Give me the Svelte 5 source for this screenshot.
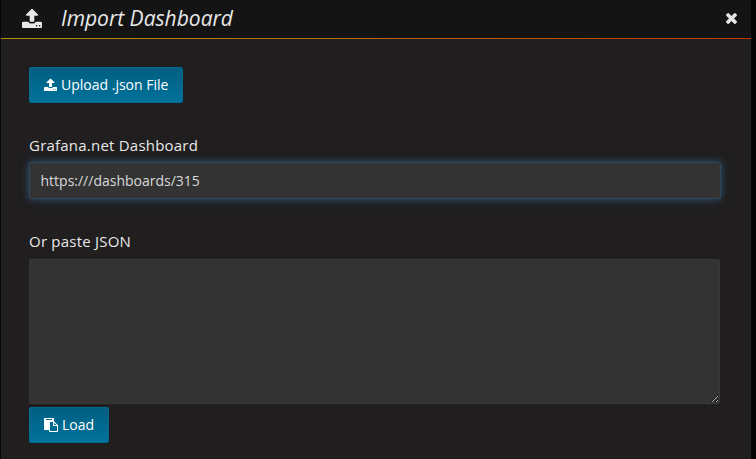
<script>
  let url = $state('https:///dashboards/315');
  let json = $state('');
</script>

{#snippet uploadIcon(size)}
  <svg width={size} height={size} viewBox="64 0 1664 1664" aria-hidden="true">
    <path d="M1344 1472q0-26-19-45t-45-19-45 19-19 45 19 45 45 19 45-19 19-45zm256 0q0-26-19-45t-45-19-45 19-19 45 19 45 45 19 45-19 19-45zm128-224v320q0 40-28 68t-68 28h-1472q-40 0-68-28t-28-68v-320q0-40 28-68t68-28h427q21 56 70.5 92t110.5 36h256q61 0 110.5-36t70.5-92h427q40 0 68 28t28 68zm-325-648q-17 40-59 40h-256v448q0 26-19 45t-45 19h-256q-26 0-45-19t-19-45v-448h-256q-42 0-59-40-17-39 14-69l448-448q18-19 45-19t45 19l448 448q31 30 14 69z" />
  </svg>
{/snippet}

<div class="backdrop">
  <div class="modal">
    <header>
      <span class="header-icon">{@render uploadIcon(20)}</span>
      <h2>Import Dashboard</h2>
      <button class="close" aria-label="Close">
        <svg width="11" height="11" viewBox="302 434 1188 1188" aria-hidden="true">
          <path transform="translate(0 68)" d="M1490 1322q0 40-28 68l-136 136q-28 28-68 28t-68-28l-294-294-294 294q-28 28-68 28t-68-28l-136-136q-28-28-28-68t28-68l294-294-294-294q-28-28-28-68t28-68l136-136q28-28 68-28t68 28l294 294 294-294q28-28 68-28t68 28l136 136q28 28 28 68t-28 68l-294 294 294 294q28 28 28 68z" />
        </svg>
      </button>
    </header>
    <div class="rule"></div>
    <div class="content">
      <button class="btn upload">{@render uploadIcon(13)}<span>Upload .json File</span></button>
      <label class="net" for="url">Grafana.net Dashboard</label>
      <input id="url" type="text" bind:value={url} />
      <label class="paste" for="json">Or paste JSON</label>
      <textarea id="json" bind:value={json}></textarea>
      <button class="btn load">
        <svg width="14" height="14" viewBox="0 0 1792 1792" aria-hidden="true">
          <path d="M768 1664h896v-640h-416q-40 0-68-28t-28-68v-416h-384v1152zm256-1440v-64q0-13-9.5-22.5t-22.5-9.5h-704q-13 0-22.5 9.5t-9.5 22.5v64q0 13 9.5 22.5t22.5 9.5h704q13 0 22.5-9.5t9.5-22.5zm256 672h299l-299-299v299zm512 128v672q0 40-28 68t-68 28h-960q-40 0-68-28t-28-68v-160h-544q-40 0-68-28t-28-68v-1344q0-40 28-68t68-28h1088q40 0 68 28t28 68v328q21 13 36 28l408 408q28 28 48 76t20 88z" />
        </svg><span>Load</span>
      </button>
    </div>
  </div>
</div>

<style>
  :global(body) { background: #050505; }
  .backdrop {
    box-sizing: border-box;
    height: 459px;
    padding: 0 5px 0 1px;
    overflow: hidden;
    background: #050505;
    font-family: "Open Sans", "Noto Sans", sans-serif;
    color: #e8e8e8;
  }
  .modal { height: 459px; background: #201e1f; }
  svg { display: block; flex: none; fill: currentColor; }
  header {
    display: flex;
    align-items: center;
    height: 38px;
    padding: 0 14px 0 21px;
    box-sizing: border-box;
    background: #141414;
  }
  .header-icon { margin-top: -2px; }
  h2 {
    margin: 0 0 2px 19px;
    font-size: 21px;
    line-height: 28px;
    font-weight: 400;
    font-style: italic;
    white-space: nowrap;
  }
  .close {
    margin: 0 0 1px auto;
    padding: 0;
    border: 0;
    background: none;
    color: #e8e8e8;
  }
  .rule { height: 1px; background: linear-gradient(to right, #b59100, #c03a00 99%); }
  .content {
    display: flex;
    flex-direction: column;
    align-items: flex-start;
    padding: 28px 31px 0 28px;
  }
  .btn {
    display: flex;
    align-items: center;
    box-sizing: border-box;
    height: 36px;
    padding: 0 0 0 14px;
    border: 1px solid #006b92;
    border-radius: 2px;
    background: linear-gradient(#005f81, #00729b);
    color: #fff;
    font: 14px/20px "Open Sans", "Noto Sans", sans-serif;
    white-space: nowrap;
  }
  .btn span { margin-left: 4px; }
  .upload { width: 154px; }
  .upload svg { margin-bottom: 1px; }
  .load { width: 80px; margin-top: 3px; }
  label { font-size: 15px; line-height: 20px; letter-spacing: 0.22px; }
  .net { margin-top: 32px; }
  .paste { margin-top: 32px; }
  input, textarea {
    box-sizing: border-box;
    width: 100%;
    margin: 0;
    border: 1px solid #383838;
    border-radius: 2px;
    background: #333;
    color: #d8d9da;
    font: 14px/20px "Open Sans", "Noto Sans", sans-serif;
    outline: none;
  }
  input {
    width: calc(100% + 1px);
    height: 37px;
    margin-top: 7px;
    padding: 0 10.5px;
    border-color: #30465a;
    box-shadow: 0 0 8px #2f5878;
  }
  textarea { height: 145px; margin-top: 8px; padding: 8px 11px; resize: both; }
</style>
